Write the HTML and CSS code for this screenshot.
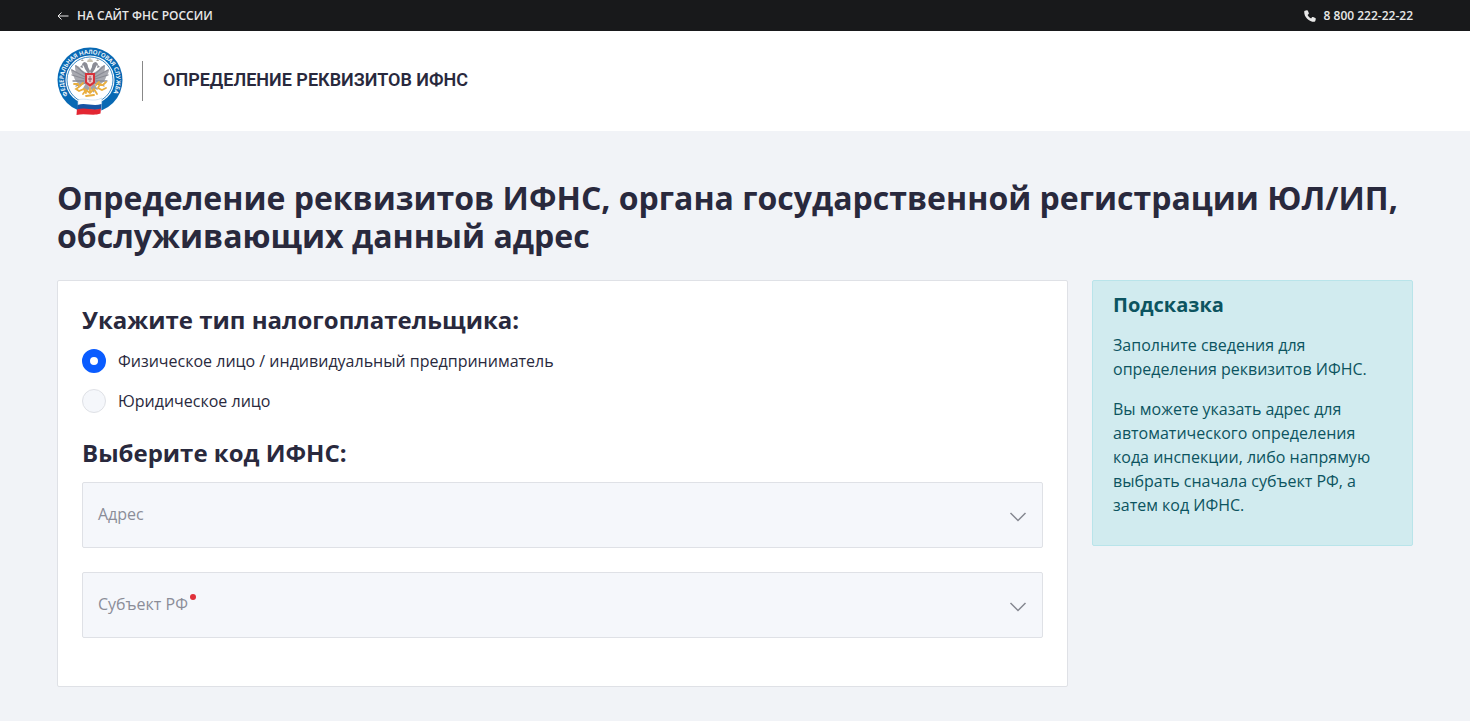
FILE: index.html
```html
<!DOCTYPE html>
<html lang="ru">

<head>
    <meta charset="UTF-8">
    <meta name="viewport" content="width=device-width, initial-scale=1">
    <title>Определение реквизитов ИФНС</title>
    <link rel="stylesheet" href="styles.css">
</head>

<body>
    <div class="topbar">
        <a href="#" class="topbar-link">
            <svg viewBox="0 0 12 10" width="12" height="10">
                <path d="M11.5 5H1M4.5 1.5L1 5l3.5 3.5" fill="none" stroke="currentColor" stroke-width="1" />
            </svg>
            НА САЙТ ФНС РОССИИ
        </a>
        <a href="tel:88002222222" class="topbar-link">
            <svg viewBox="0 0 12 12" width="12" height="12">
                <path d="M.9.8L2.8.2c.5-.1.9.1 1.100.5l.9 2.200c.2.400.1.800-.2 1.100L3.600 4.900c.7 1.500 1.900 2.700 3.500 3.500l.9-1.100c.3-.3.700-.4 1.100-.3l2.200.9c.4.2.600.6.500 1.100l-.5 2c-.1.500-.5.800-.9.800C4.800 11.800.2 7.200.2 1.700c0-.4.300-.8.7-.9z" fill="currentColor" />
            </svg>
            8 800 222-22-22
        </a>
    </div>

    <header class="header">
        <a href="#" class="logo" aria-label="ФНС России">
            <svg viewBox="0 0 66 69" width="66" height="69">
                <defs>
                    <path id="ring" d="M11 48A26.400 26.400 0 1 1 55 48" />
                </defs>
                <circle cx="33" cy="33" r="32.500" fill="#0869b4" />
                <circle cx="33" cy="33" r="24.500" fill="#fff" />
                <circle cx="33" cy="33" r="23" fill="none" stroke="#0869b4" stroke-width=".8" />
                <text class="logo-text"><textPath href="#ring">ФЕДЕРАЛЬНАЯ НАЛОГОВАЯ СЛУЖБА</textPath></text>

                <!-- wings, left one mirrored to the right -->
                <g id="wing" fill="#8b8c95" stroke="#8b8c95" stroke-linecap="round">
                    <path d="M30 26c-2-1-5-2-7-5-1-2-3-2-5-3 0 3 0 5 1 7-2-1-3-2-5-3 0 3 1 5 3 8 1 4 4 7 8 8l6-2z" stroke="none" opacity=".75" />
                    <path d="M28 27l-9-8M28 30l-13-7M28 32l-13-4M27 34l-11 0M28 36l-9 3" fill="none" stroke-width="1.300" />
                    <path d="M32 28l-4-6c-1-2-1-4-3-4l-2 2 3 1-1-4 2-2c3 0 4 3 4 5l2 4z" stroke="none" />
                    <path d="M29 36l-4 7 3-1 1 4 4-5z" stroke="none" opacity=".8" />
                </g>
                <use href="#wing" transform="matrix(-1 0 0 1 66 0)" />
                <path d="M30 15l1-3 1 1 1-3 1 3 1-1 1 3z" fill="#c9c2b2" />
                <path d="M24 14l1-2 2 2zM39 14l2-2 1 2z" fill="#a9a49d" />
                <path d="M28 26h10v10l-5 4-5-4z" fill="#d6323a" />
                <path d="M30 28h6v7l-3 2-3-2z" fill="#e9bfc0" />
                <path d="M33 29v6M31 32h4" stroke="#8b5867" stroke-width="1" />

                <!-- gold ornament -->
                <g fill="none" stroke="#e9ae3f" stroke-width="1.800" stroke-linecap="round">
                    <path d="M17 37l4 0 1 3-3 2 3 2 5-2 2 4M49 35l-3 3-3-1-2 4 4 2 4-2" />
                    <path d="M26 47l3-4 4 3 4-4 3 5M29 49l8-1M23 39l3-3M39 38l3-3M33 41v5" />
                </g>

                <!-- flag ribbon -->
                <path d="M21 53c8-3 14 3 24-2l-1 13c-8 4-14-1-23 2z" fill="#fff" stroke="#b9d3e8" stroke-width=".6" />
                <path d="M20.500 58c8-3 15 2 24-1l-.4 5c-9 3-16-2-24 1z" fill="#1654a4" />
                <path d="M19.900 62.500c9-3 16 2 24-1l-.4 5c-8 3-15-1-24 1.500z" fill="#e32632" />
            </svg>
        </a>
        <div class="header-title">ОПРЕДЕЛЕНИЕ РЕКВИЗИТОВ ИФНС</div>
    </header>

    <main class="main">
        <h1>Определение реквизитов ИФНС, органа государственной регистрации ЮЛ/ИП, обслуживающих данный адрес</h1>
        <div class="row">
            <form class="card">
                <h2>Укажите тип налогоплательщика:</h2>
                <div class="radios">
                    <label class="radio">
                        <input type="radio" name="type" checked>
                        Физическое лицо / индивидуальный предприниматель
                    </label>
                    <label class="radio">
                        <input type="radio" name="type">
                        Юридическое лицо
                    </label>
                </div>
                <h2>Выберите код ИФНС:</h2>
                <div class="field">
                    <select id="address">
                        <option value=""></option>
                    </select>
                    <label for="address">Адрес</label>
                    <svg class="chevron" viewBox="0 0 18 10" width="18" height="10">
                        <path d="M1.500 1L9 8.500 16.500 1" />
                    </svg>
                </div>
                <div class="field">
                    <select id="region" required>
                        <option value=""></option>
                    </select>
                    <label for="region" class="required">Субъект РФ</label>
                    <svg class="chevron" viewBox="0 0 18 10" width="18" height="10">
                        <path d="M1.500 1L9 8.500 16.500 1" />
                    </svg>
                </div>
            </form>
            <aside class="hint">
                <h3>Подсказка</h3>
                <p>Заполните сведения для определения реквизитов ИФНС.</p>
                <p>Вы можете указать адрес для автоматического определения кода инспекции, либо напрямую выбрать сначала субъект РФ, а затем код ИФНС.</p>
            </aside>
        </div>
    </main>
</body>

</html>
```
FILE: styles.css
```css
* {
    box-sizing: border-box;
    margin: 0;
    padding: 0;
}

body {
    background: #f1f3f7;
    color: #29293d;
    font: 16px/24px "Open Sans", "Noto Sans", sans-serif;
}

svg {
    display: block;
}

.topbar {
    display: flex;
    justify-content: space-between;
    padding: 5px 57px;
    background: #18191b;
}

.topbar-link {
    display: flex;
    align-items: center;
    gap: 8px;
    color: #e8e8e8;
    font-size: 12px;
    font-weight: 600;
    line-height: 21px;
    text-decoration: none;
}

.header {
    display: flex;
    align-items: center;
    gap: 19px;
    min-height: 100px;
    padding: 15px 57px;
    background: #fff;
}

.header-title {
    font: 600 18px/38px Roboto, sans-serif;
    padding: 0 0 2px 20px;
    border-left: 1px solid #888;
}

.logo-text {
    font-family: "Noto Sans", sans-serif;
    font-size: 6px;
    font-weight: 600;
    fill: #fff;
}

.main {
    padding: 48px 57px 34px;
}

h1 {
    font-size: 32px;
    line-height: 38px;
    margin-bottom: 25px;
}

.row {
    display: grid;
    grid-template-columns: repeat(12, 1fr);
    align-items: start;
    gap: 24px;
}

.card {
    grid-column: span 9;
    padding: 24px;
    background: #fff;
    border: 1px solid #dfe1e6;
    border-radius: 2px;
}

h2 {
    font-size: 24px;
    line-height: 29px;
    margin-bottom: 15px;
}

.radios {
    display: flex;
    flex-direction: column;
    align-items: flex-start;
    gap: 16px;
    margin-bottom: 25px;
}

.radio {
    display: flex;
    align-items: center;
    gap: 12px;
    cursor: pointer;
}

.radio input {
    appearance: none;
    width: 24px;
    height: 24px;
    background: #f5f7fb;
    border: 1px solid #dfe1e6;
    border-radius: 50%;
}

.radio input:checked {
    background: #fff;
    border: 8px solid #0a5cff;
}

.field {
    position: relative;
    margin-bottom: 24px;
}

.field select {
    appearance: none;
    display: block;
    width: 100%;
    height: 66px;
    padding: 0 48px 0 15px;
    background: #f5f7fb;
    border: 1px solid #dfe1e6;
    border-radius: 2px;
    color: #29293d;
    font: inherit;
}

/* label lies over the empty select */
.field label {
    position: absolute;
    top: 20px;
    left: 16px;
    color: #8b8d98;
    pointer-events: none;
}

.required::after {
    content: "";
    position: absolute;
    top: 2px;
    left: 100%;
    width: 6px;
    height: 6px;
    margin-left: 2px;
    background: #e0303a;
    border-radius: 50%;
}

.chevron {
    position: absolute;
    top: 30px;
    right: 16px;
    fill: none;
    stroke: #858790;
    stroke-width: 1.5;
    pointer-events: none;
}

.hint {
    grid-column: span 3;
    padding: 12px 20px;
    background: #d1ebef;
    border: 1px solid #b9e4ea;
    border-radius: 2px;
    color: #0c5460;
}

.hint h3 {
    font-size: 20px;
    line-height: 24px;
    margin-bottom: 16px;
}

.hint p {
    margin-bottom: 16px;
}
```
